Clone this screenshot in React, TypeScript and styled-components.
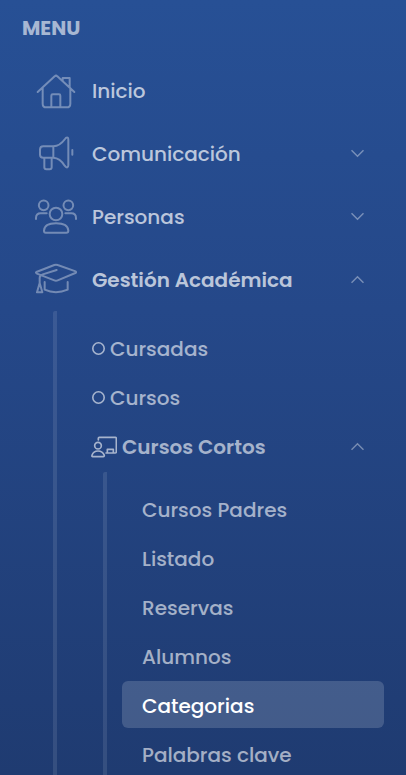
import React, { useState } from "react";
import styled, { createGlobalStyle } from "styled-components";

const GlobalStyle = createGlobalStyle`
  * { box-sizing: border-box; }
  body { margin: 0; }
  ul { list-style: none; margin: 0; padding: 0; }
`;

const Sidebar = styled.nav`
  height: 100vh;
  overflow: hidden;
  padding: 16px 22px 0;
  background: linear-gradient(180deg, #275095 0%, #254889 40%, #1f3b71 100%);
  color: rgba(255, 255, 255, 0.6);
  font-family: Poppins, Inter, sans-serif;
  font-size: 20px;
  font-weight: 500;
  line-height: 24px;
`;

const Heading = styled.h2`
  margin: 0 0 27px;
  font-size: 20px;
  font-weight: 700;
  line-height: 24px;
`;

const MainList = styled.ul`
  display: flex;
  flex-direction: column;
  gap: 16px;
`;

const SubList = styled.ul`
  display: flex;
  flex-direction: column;
  gap: 2px;
  margin: 8px 0 0 31px;
  padding: 14px 0 20px 19px;
  border-left: 4px solid rgba(255, 255, 255, 0.1);
  border-top-left-radius: 2px;
`;

const NestedList = styled(SubList)`
  margin: 2px 0 0 27px;
  padding: 13px 0 20px 15px;
`;

const linkLook = `
  display: flex;
  align-items: center;
  width: 100%;
  height: 47px;
  border: 0;
  background: none;
  color: inherit;
  font: inherit;
  text-align: left;
  text-decoration: none;
  white-space: nowrap;
  cursor: pointer;
`;

const MainLink = styled.a`
  ${linkLook}
  gap: 15px;
  padding: 0 20px 0 13px;
  color: rgba(255, 255, 255, 0.7);
`;

const MainToggle = styled.button<{ $open?: boolean }>`
  ${linkLook}
  gap: 15px;
  padding: 0 20px 0 13px;
  color: rgba(255, 255, 255, 0.7);
  font-weight: ${(p) => (p.$open ? 600 : 500)};
`;

const SubLink = styled.a`
  ${linkLook}
  gap: 5px;
  padding: 0 20px 0 16px;
`;

const SubToggle = styled.button<{ $open?: boolean }>`
  ${linkLook}
  gap: 5px;
  padding: 0 20px 0 15px;
  font-weight: ${(p) => (p.$open ? 600 : 500)};
`;

const LeafLink = styled.a<{ $active: boolean }>`
  ${linkLook}
  padding: 2px 20px 0;
  border-radius: 6px;
  background: ${(p) => (p.$active ? "rgba(255, 255, 255, 0.16)" : "none")};
  color: ${(p) => (p.$active ? "#fff" : "inherit")};
`;

const Label = styled.span`
  flex: 1;
`;

const LineIcon = styled.svg`
  flex: none;
  fill: none;
  stroke: rgba(255, 255, 255, 0.36);
  stroke-width: 6;
  stroke-linecap: round;
  stroke-linejoin: round;
`;

const SmallIcon = styled(LineIcon)`
  stroke: rgba(255, 255, 255, 0.6);
  stroke-width: 5;
`;

const ChevronIcon = styled.svg<{ $up: boolean }>`
  flex: none;
  fill: none;
  stroke: rgba(255, 255, 255, 0.38);
  stroke-width: 1.5;
  transform: ${(p) => (p.$up ? "rotate(180deg)" : "none")};
`;

const RingIcon = styled(LineIcon)`
  stroke: rgba(255, 255, 255, 0.6);
  stroke-width: 1.6;
`;

const Ring = () => (
  <RingIcon width="13" height="13" viewBox="0 0 13 13" aria-hidden="true">
    <circle cx="6.5" cy="6.5" r="5.7" />
  </RingIcon>
);

const Chevron = ({ up = false }: { up?: boolean }) => (
  <ChevronIcon $up={up} width="13" height="9" viewBox="0 0 13 9" aria-hidden="true">
    <path d="M.5 1.2 6.5 7.2 12.5 1.2" />
  </ChevronIcon>
);

const HomeIcon = () => (
  <LineIcon width="42" height="40" viewBox="30 30 126 120" aria-hidden="true">
    <path d="M38 93 89 46Q93 42 97 46L148 93M53 81V128Q53 139 64 139H125Q136 139 136 128V81M113 59V51H134V79M79 138V104Q79 100 83 100H102Q106 100 106 104V138" />
  </LineIcon>
);

const MegaphoneIcon = () => (
  <LineIcon width="42" height="40" viewBox="30 219 126 120" aria-hidden="true">
    <path d="M85 256H55Q45 256 45 266V281Q45 290 55 290H85ZM85 256Q105 255 120 234Q123 229 128 230Q130 231 130 236V312Q130 318 127 319Q123 320 119 314Q105 291 85 290M58 291V319Q58 325 64 325H74Q80 325 80 319V291M142 267V281" />
  </LineIcon>
);

const PeopleIcon = () => (
  <LineIcon width="42" height="40" viewBox="30 48 126 120" aria-hidden="true">
    <circle cx="56" cy="73" r="14.5" />
    <circle cx="130" cy="73" r="14.5" />
    <circle cx="93" cy="99" r="19" />
    <path d="M33 114V111Q33 97 47 97H65M153 114V111Q153 97 139 97H121M62 155Q57 155 57 149C58 134 70 127 93 127S129 134 130 149Q130 155 124 155Z" />
  </LineIcon>
);

const GraduationIcon = () => (
  <LineIcon width="42" height="40" viewBox="30 237 126 120" aria-hidden="true">
    <path d="M34 273 88 252Q93 250 98 252L152 271Q155 274 151 276L98 298Q93 300 88 298L36 278Q31 275 34 273ZM95 267 51 281Q44 283 44 291V306M44 306 36 334H52ZM59 303V326Q92 341 128 326V303" />
  </LineIcon>
);

const ClassroomIcon = () => (
  <SmallIcon width="26" height="22" viewBox="153 406 78 66" aria-hidden="true">
    <path d="M175 418V413Q175 410 178 410H226Q229 410 229 413V453Q229 457 225 457H198M202 456V446H220V456" />
    <circle cx="174" cy="435" r="10" />
    <path d="M158 468Q155 468 156 464Q160 451 174 451T193 464Q193 468 190 468Z" />
  </SmallIcon>
);

const courseItems = ["Cursos Padres", "Listado", "Reservas", "Alumnos", "Categorias", "Palabras clave"];

export default function App() {
  const [academicOpen, setAcademicOpen] = useState(true);
  const [coursesOpen, setCoursesOpen] = useState(true);
  const [active, setActive] = useState("Categorias");

  return (
    <>
      <GlobalStyle />
      <Sidebar aria-label="Menu">
        <Heading>MENU</Heading>
        <MainList>
          <li>
            <MainLink href="#inicio"><HomeIcon /><Label>Inicio</Label></MainLink>
          </li>
          <li>
            <MainToggle type="button" aria-expanded={false}>
              <MegaphoneIcon /><Label>Comunicación</Label><Chevron />
            </MainToggle>
          </li>
          <li>
            <MainToggle type="button" aria-expanded={false}>
              <PeopleIcon /><Label>Personas</Label><Chevron />
            </MainToggle>
          </li>
          <li>
            <MainToggle
              type="button"
              $open={academicOpen}
              aria-expanded={academicOpen}
              onClick={() => setAcademicOpen(!academicOpen)}
            >
              <GraduationIcon /><Label>Gestión Académica</Label><Chevron up={academicOpen} />
            </MainToggle>
            {academicOpen && (
              <SubList>
                <li><SubLink href="#cursadas"><Ring /><Label>Cursadas</Label></SubLink></li>
                <li><SubLink href="#cursos"><Ring /><Label>Cursos</Label></SubLink></li>
                <li>
                  <SubToggle
                    type="button"
                    $open={coursesOpen}
                    aria-expanded={coursesOpen}
                    onClick={() => setCoursesOpen(!coursesOpen)}
                  >
                    <ClassroomIcon /><Label>Cursos Cortos</Label><Chevron up={coursesOpen} />
                  </SubToggle>
                  {coursesOpen && (
                    <NestedList>
                      {courseItems.map((name) => (
                        <li key={name}>
                          <LeafLink
                            href={"#" + name.toLowerCase().replace(" ", "-")}
                            $active={name === active}
                            aria-current={name === active ? "page" : undefined}
                            onClick={() => setActive(name)}
                          >
                            {name}
                          </LeafLink>
                        </li>
                      ))}
                    </NestedList>
                  )}
                </li>
              </SubList>
            )}
          </li>
        </MainList>
      </Sidebar>
    </>
  );
}
